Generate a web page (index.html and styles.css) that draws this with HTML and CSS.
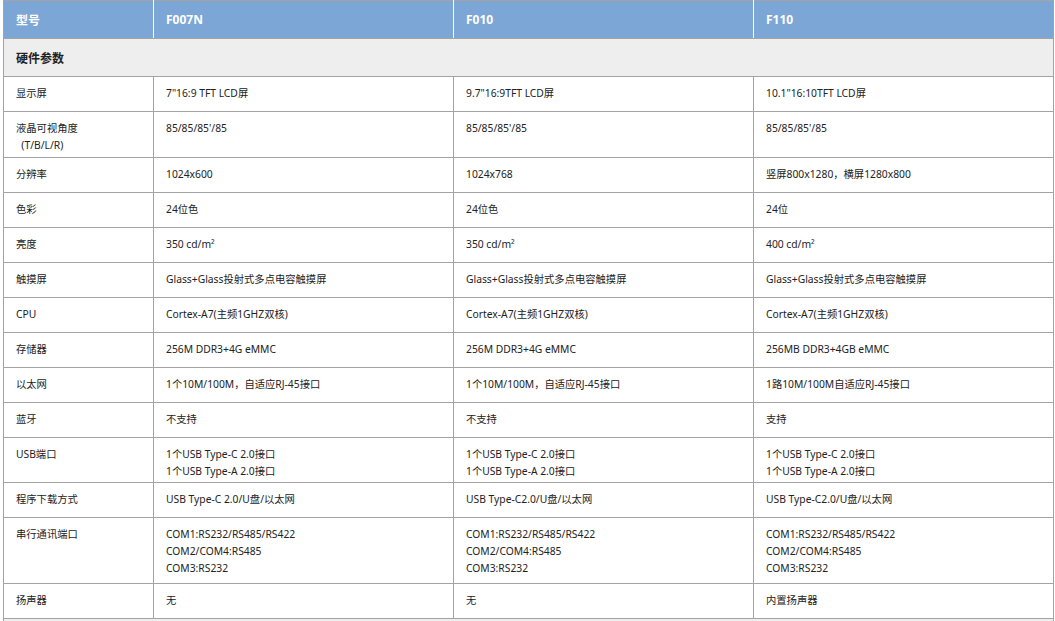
FILE: index.html
```html
<!DOCTYPE html>
<html lang="zh-CN">
<head>
<meta charset="utf-8">
<title>参数</title>
<link rel="stylesheet" href="styles.css">
</head>
<body>
<table class="spec">
  <colgroup>
    <col class="c-name">
    <col class="c-val">
    <col class="c-val">
    <col class="c-val">
  </colgroup>
  <thead>
    <tr class="head">
      <th>型号</th>
      <th>F007N</th>
      <th>F010</th>
      <th class="last">F110</th>
    </tr>
  </thead>
  <tbody>
    <tr class="section"><td colspan="4">硬件参数</td></tr>
    <tr class="r1"><td>显示屏</td><td>7"16:9 TFT LCD屏</td><td>9.7"16:9TFT LCD屏</td><td>10.1"16:10TFT LCD屏</td></tr>
    <tr class="r2"><td>液晶可视角度<br>&nbsp;&nbsp;(T/B/L/R)</td><td>85/85/85'/85</td><td>85/85/85'/85</td><td>85/85/85'/85</td></tr>
    <tr class="r1"><td>分辨率</td><td>1024x600</td><td>1024x768</td><td>竖屏800x1280，横屏1280x800</td></tr>
    <tr class="r1"><td>色彩</td><td>24位色</td><td>24位色</td><td>24位</td></tr>
    <tr class="r1"><td>亮度</td><td>350 cd/m²</td><td>350 cd/m²</td><td>400 cd/m²</td></tr>
    <tr class="r1"><td>触摸屏</td><td>Glass+Glass投射式多点电容触摸屏</td><td>Glass+Glass投射式多点电容触摸屏</td><td>Glass+Glass投射式多点电容触摸屏</td></tr>
    <tr class="r1"><td>CPU</td><td>Cortex-A7(主频1GHZ双核)</td><td>Cortex-A7(主频1GHZ双核)</td><td>Cortex-A7(主频1GHZ双核)</td></tr>
    <tr class="r1"><td>存储器</td><td>256M DDR3+4G eMMC</td><td>256M DDR3+4G eMMC</td><td>256MB DDR3+4GB eMMC</td></tr>
    <tr class="r1"><td>以太网</td><td>1个10M/100M，自适应RJ-45接口</td><td>1个10M/100M，自适应RJ-45接口</td><td>1路10M/100M自适应RJ-45接口</td></tr>
    <tr class="r1"><td>蓝牙</td><td>不支持</td><td>不支持</td><td>支持</td></tr>
    <tr class="r2b"><td>USB端口</td><td>1个USB Type-C 2.0接口<br>1个USB Type-A 2.0接口</td><td>1个USB Type-C 2.0接口<br>1个USB Type-A 2.0接口</td><td>1个USB Type-C 2.0接口<br>1个USB Type-A 2.0接口</td></tr>
    <tr class="r1"><td>程序下载方式</td><td>USB Type-C 2.0/U盘/以太网</td><td>USB Type-C2.0/U盘/以太网</td><td>USB Type-C2.0/U盘/以太网</td></tr>
    <tr class="r3"><td>串行通讯端口</td><td>COM1:RS232/RS485/RS422<br>COM2/COM4:RS485<br>COM3:RS232</td><td>COM1:RS232/RS485/RS422<br>COM2/COM4:RS485<br>COM3:RS232</td><td>COM1:RS232/RS485/RS422<br>COM2/COM4:RS485<br>COM3:RS232</td></tr>
    <tr class="r1"><td>扬声器</td><td>无</td><td>无</td><td>内置扬声器</td></tr>
    <tr class="section"><td colspan="4"></td></tr>
  </tbody>
</table>
</body>
</html>
```

FILE: styles.css
```css
html, body {
  margin: 0;
  padding: 0;
  background: #ffffff;
}

body {
  font-family: "Noto Sans", "Noto Sans CJK SC", sans-serif;
  color: #222222;
}

.spec {
  margin-left: 3px;
  width: 1050px;
  border-collapse: collapse;
  table-layout: fixed;
  border: 1px solid #a3a3a3;
}

.c-name { width: 150px; }
.c-val { width: 300px; }

.spec th,
.spec td {
  border: 1px solid #a3a3a3;
  padding: 0 12px;
  text-align: left;
}

.head {
  height: 38px;
  background: #7ba6d6;
}

.head th {
  color: #ffffff;
  font-size: 12px;
  font-weight: 700;
  vertical-align: middle;
  border-right-color: #ffffff;
  border-left-color: #ffffff;
}

.head th:first-child { border-left-color: #a3a3a3; }
.head th.last { border-right-color: #a3a3a3; }

.section {
  height: 38px;
  background: #eeeeee;
}

.section td {
  font-size: 12px;
  font-weight: 700;
  color: #222222;
  vertical-align: middle;
}

.spec tbody tr:not(.section) td {
  font-size: 10.3px;
  line-height: 17px;
  vertical-align: top;
  padding-top: 8px;
  padding-bottom: 0;
  white-space: nowrap;
}

.r1 { height: 35px; }
.r2 { height: 46px; }
.r2b { height: 45px; }
.r3 { height: 66px; }
```
